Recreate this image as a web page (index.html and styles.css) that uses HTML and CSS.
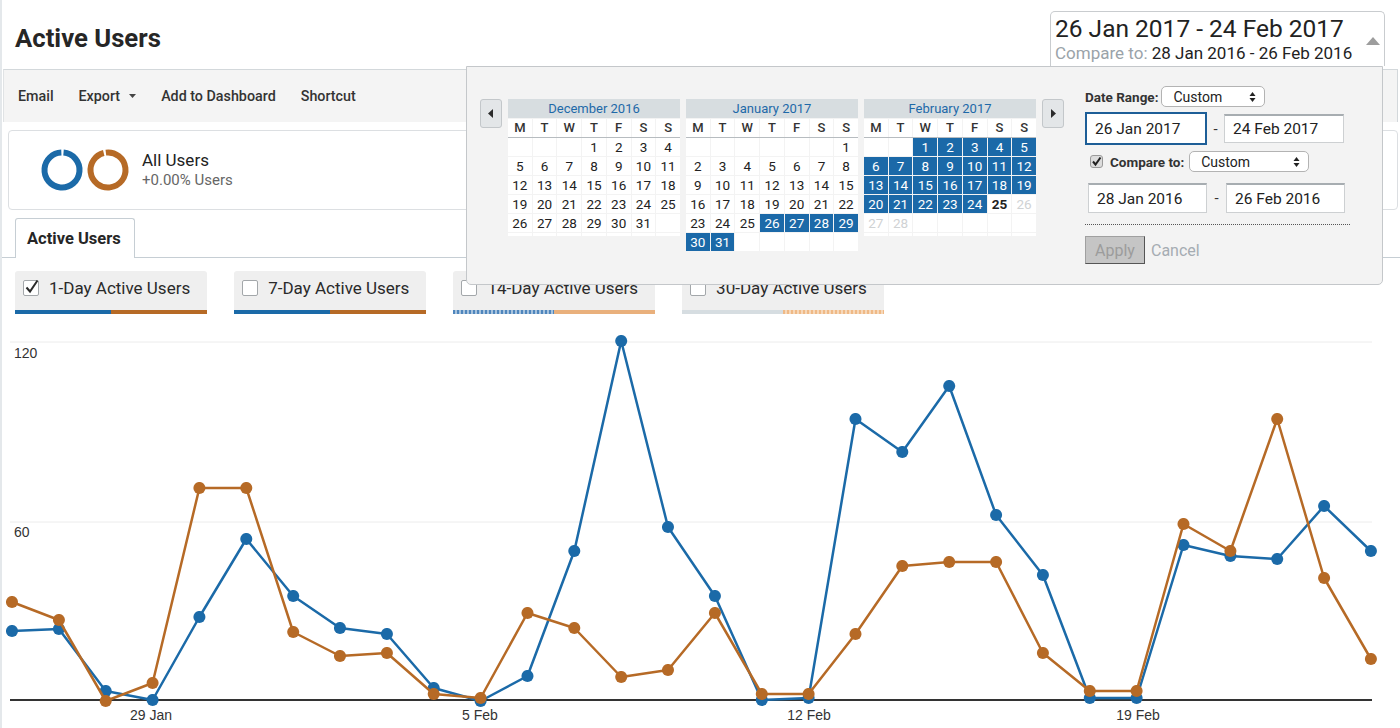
FILE: index.html
```html
<!DOCTYPE html>
<html lang="en">
<head>
<meta charset="utf-8">
<title>Active Users</title>
<link rel="stylesheet" href="styles.css">
</head>
<body>
<div class="page">
  <header class="head">
    <h1 class="title">Active Users</h1>
    <div class="range">
      <div class="range-box">
        <div class="range-text">
          <div class="range-main">26 Jan 2017 - 24 Feb 2017</div>
          <div class="range-cmp"><span class="cmp-label">Compare to:</span> 28 Jan 2016 - 26 Feb 2016</div>
        </div>
        <div class="range-caret"><svg width="14" height="8" viewBox="0 0 14 8"><path d="M7 0 L14 8 H0Z" fill="#9d9d9d"/></svg></div>
      </div>
      <div class="popup">
        <div class="cals">
          <div class="nav"><svg width="6" height="9" viewBox="0 0 6 9"><path d="M5 0 V9 L0 4.5Z" fill="#2b2b2b"/></svg></div>
          <div class="month">
            <div class="month-title">December 2016</div>
            <div class="wk"><span>M</span><span>T</span><span>W</span><span>T</span><span>F</span><span>S</span><span>S</span></div>
            <div class="days short">
              <span></span><span></span><span></span><span>1</span><span>2</span><span>3</span><span>4</span>
              <span>5</span><span>6</span><span>7</span><span>8</span><span>9</span><span>10</span><span>11</span>
              <span>12</span><span>13</span><span>14</span><span>15</span><span>16</span><span>17</span><span>18</span>
              <span>19</span><span>20</span><span>21</span><span>22</span><span>23</span><span>24</span><span>25</span>
              <span>26</span><span>27</span><span>28</span><span>29</span><span>30</span><span>31</span><span></span>
              <span></span><span></span><span></span><span></span><span></span><span></span><span></span>
            </div>
          </div>
          <div class="month">
            <div class="month-title">January 2017</div>
            <div class="wk"><span>M</span><span>T</span><span>W</span><span>T</span><span>F</span><span>S</span><span>S</span></div>
            <div class="days">
              <span></span><span></span><span></span><span></span><span></span><span></span><span>1</span>
              <span>2</span><span>3</span><span>4</span><span>5</span><span>6</span><span>7</span><span>8</span>
              <span>9</span><span>10</span><span>11</span><span>12</span><span>13</span><span>14</span><span>15</span>
              <span>16</span><span>17</span><span>18</span><span>19</span><span>20</span><span>21</span><span>22</span>
              <span>23</span><span>24</span><span>25</span><span class="s">26</span><span class="s">27</span><span class="s">28</span><span class="s">29</span>
              <span class="s">30</span><span class="s">31</span><span></span><span></span><span></span><span></span><span></span>
            </div>
          </div>
          <div class="month">
            <div class="month-title">February 2017</div>
            <div class="wk"><span>M</span><span>T</span><span>W</span><span>T</span><span>F</span><span>S</span><span>S</span></div>
            <div class="days short">
              <span></span><span></span><span class="s">1</span><span class="s">2</span><span class="s">3</span><span class="s">4</span><span class="s">5</span>
              <span class="s">6</span><span class="s">7</span><span class="s">8</span><span class="s">9</span><span class="s">10</span><span class="s">11</span><span class="s">12</span>
              <span class="s">13</span><span class="s">14</span><span class="s">15</span><span class="s">16</span><span class="s">17</span><span class="s">18</span><span class="s">19</span>
              <span class="s">20</span><span class="s">21</span><span class="s">22</span><span class="s">23</span><span class="s">24</span><span class="t">25</span><span class="m">26</span>
              <span class="m">27</span><span class="m">28</span><span></span><span></span><span></span><span></span><span></span>
              <span></span><span></span><span></span><span></span><span></span><span></span><span></span>
            </div>
          </div>
          <div class="nav"><svg width="6" height="9" viewBox="0 0 6 9"><path d="M1 0 V9 L6 4.5Z" fill="#2b2b2b"/></svg></div>
        </div>
        <div class="form">
          <div class="frow r1">
            <span class="lbl">Date Range:</span>
            <div class="sel-box sel-a"><span>Custom</span><svg width="7" height="12" viewBox="0 0 7 12"><path d="M3.5 1 L6.5 5 H0.5Z M3.5 11 L6.5 7 H0.5Z" fill="#222"/></svg></div>
          </div>
          <div class="frow r2">
            <div class="inp inp-focus">26 Jan 2017</div>
            <span class="dash">-</span>
            <div class="inp inp-a">24 Feb 2017</div>
          </div>
          <div class="frow r3">
            <span class="chk"><svg width="11" height="11" viewBox="0 0 11 11"><path d="M2 5.5 L4.5 8.5 L9.5 1.5" stroke="#222" stroke-width="2" fill="none"/></svg></span>
            <span class="lbl">Compare to:</span>
            <div class="sel-box sel-b"><span>Custom</span><svg width="7" height="12" viewBox="0 0 7 12"><path d="M3.5 1 L6.5 5 H0.5Z M3.5 11 L6.5 7 H0.5Z" fill="#222"/></svg></div>
          </div>
          <div class="frow r4">
            <div class="inp inp-b">28 Jan 2016</div>
            <span class="dash">-</span>
            <div class="inp inp-b">26 Feb 2016</div>
          </div>
          <div class="rule"></div>
          <div class="frow r5">
            <span class="apply">Apply</span>
            <span class="cancel">Cancel</span>
          </div>
        </div>
      </div>
    </div>
  </header>

  <nav class="toolbar">
    <span class="tb">Email</span>
    <span class="tb">Export <svg width="7" height="4" viewBox="0 0 7 4"><path d="M0 0 H7 L3.5 4Z" fill="#444"/></svg></span>
    <span class="tb">Add to Dashboard</span>
    <span class="tb">Shortcut</span>
  </nav>

  <section class="segment">
    <svg class="donuts" width="92" height="44" viewBox="0 0 92 44">
      <circle cx="23" cy="22" r="17.5" fill="none" stroke="#1b6aa8" stroke-width="6" stroke-dasharray="107 3" transform="rotate(-85 23 22)"/>
      <circle cx="69" cy="22" r="17.5" fill="none" stroke="#b66a26" stroke-width="6" stroke-dasharray="107 3" transform="rotate(-97 69 22)"/>
    </svg>
    <div class="seg-text">
      <div class="seg-name">All Users</div>
      <div class="seg-sub">+0.00% Users</div>
    </div>
  </section>

  <div class="tabs">
    <div class="tab">Active Users</div>
  </div>

  <div class="metrics">
    <div class="metric">
      <div class="metric-main">
        <span class="cb"><svg width="18" height="18" viewBox="0 0 18 18"><path d="M3.5 9.5 L7 13.5 L14.5 2.5" stroke="#2a2a2a" stroke-width="2" fill="none"/></svg></span>
        <span class="metric-label">1-Day Active Users</span>
      </div>
      <div class="metric-bar"><span class="bar-blue"></span><span class="bar-orange"></span></div>
    </div>
    <div class="metric">
      <div class="metric-main">
        <span class="cb"></span>
        <span class="metric-label">7-Day Active Users</span>
      </div>
      <div class="metric-bar"><span class="bar-blue"></span><span class="bar-orange"></span></div>
    </div>
    <div class="metric">
      <div class="metric-main">
        <span class="cb"></span>
        <span class="metric-label">14-Day Active Users</span>
      </div>
      <div class="metric-bar"><span class="bar-blue-dot"></span><span class="bar-orange-light"></span></div>
    </div>
    <div class="metric">
      <div class="metric-main">
        <span class="cb"></span>
        <span class="metric-label">30-Day Active Users</span>
      </div>
      <div class="metric-bar"><span class="bar-gray"></span><span class="bar-orange-hatch"></span></div>
    </div>
  </div>

  <svg class="chart" width="1398" height="408" viewBox="2 320 1398 408">
    <defs>
      <marker id="mb" viewBox="0 0 14 14" refX="7" refY="7" markerWidth="13" markerHeight="13" markerUnits="userSpaceOnUse"><circle cx="7" cy="7" r="6.5" fill="#1b6aa8"/></marker>
      <marker id="mo" viewBox="0 0 14 14" refX="7" refY="7" markerWidth="13" markerHeight="13" markerUnits="userSpaceOnUse"><circle cx="7" cy="7" r="6.5" fill="#b66a26"/></marker>
    </defs>
    <line x1="10" y1="342" x2="1372" y2="342" stroke="#ececec" stroke-width="1"/>
    <line x1="10" y1="522" x2="1372" y2="522" stroke="#ececec" stroke-width="1"/>
    <text class="ax" x="14" y="357.5">120</text>
    <text class="ax" x="14" y="537">60</text>
    <line x1="10" y1="700" x2="1372" y2="700" stroke="#333" stroke-width="2"/>
    <polyline class="ln-blue" marker-start="url(#mb)" marker-mid="url(#mb)" marker-end="url(#mb)" points="12,631 58.9,629 105.7,691 152.6,700 199.4,617 246.3,539 293.2,596 340,628 386.9,634 433.7,688 480.6,701 527.5,676 574.3,551 621.2,341 668,527 714.9,596 761.8,700 808.6,698 855.5,419 902.3,452 949.2,386 996.1,515 1042.9,575 1089.8,698 1136.6,698 1183.5,545 1230.4,556 1277.2,559 1324.1,506 1370.9,551"/>
    <polyline class="ln-orange" marker-start="url(#mo)" marker-mid="url(#mo)" marker-end="url(#mo)" points="12,602 58.9,620 105.7,701 152.6,683 199.4,488 246.3,488 293.2,632 340,656 386.9,653 433.7,694 480.6,698 527.5,613 574.3,628 621.2,677 668,670 714.9,613 761.8,694 808.6,694 855.5,634 902.3,566 949.2,562 996.1,562 1042.9,653 1089.8,691 1136.6,691 1183.5,524 1230.4,551 1277.2,419 1324.1,578 1370.9,659"/>
    <text class="ax mid" x="151" y="720">29 Jan</text>
    <text class="ax mid" x="480" y="720">5 Feb</text>
    <text class="ax mid" x="809" y="720">12 Feb</text>
    <text class="ax mid" x="1138" y="720">19 Feb</text>
  </svg>
</div>
</body>
</html>
```

FILE: styles.css
```css
* { box-sizing: border-box; }
html, body { margin: 0; padding: 0; }
body {
  width: 1400px;
  height: 728px;
  overflow: hidden;
  background: #fff;
  font-family: Roboto, "Noto Sans", Arial, sans-serif;
  color: #222;
}
.page { border-left: 2px solid #e4e8eb; height: 728px; }

/* header */
.head {
  position: relative;
  z-index: 5;
  height: 69px;
  display: flex;
  justify-content: space-between;
  align-items: flex-start;
}
.title {
  margin: 0;
  padding: 23px 0 0 13px;
  font-size: 25.7px;
  line-height: 30px;
  font-weight: 700;
  color: #262626;
}
.range { position: relative; margin: 11px 15px 0 0; }
.range-box {
  width: 335px;
  height: 55px;
  border: 1px solid #c9cccf;
  border-bottom: 0;
  border-radius: 5px 5px 0 0;
  display: flex;
  background: #fff;
}
.range-text { flex: 1; padding: 3px 0 0 4px; }
.range-main { font-size: 24.5px; line-height: 28px; color: #222; white-space: nowrap; }
.range-cmp { font-size: 17px; line-height: 20px; color: #222; white-space: nowrap; }
.cmp-label { color: #9aa3a9; }
.range-caret { width: 23px; padding-top: 25px; display: flex; justify-content: center; align-items: flex-start; }

/* popup */
.popup {
  position: absolute;
  top: 55px;
  right: 2px;
  width: 917px;
  height: 219px;
  background: #f3f3f3;
  border: 1px solid #c4c7ca;
  border-radius: 0 0 5px 5px;
  display: flex;
  align-items: flex-start;
  padding: 19px 0 0 13px;
}
.cals { display: flex; align-items: flex-start; gap: 6px; margin-top: 13px; }
.nav {
  width: 22px;
  height: 29px;
  border: 1px solid #c3c7ca;
  border-radius: 3px;
  background: #e3e6e8;
  display: flex;
  align-items: center;
  justify-content: center;
}
.month { width: 172px; }
.month-title {
  height: 19px;
  line-height: 19px;
  margin-bottom: 1px;
  background: #d7dde0;
  color: #1e69a8;
  text-align: center;
  font-size: 13px;
}
.wk {
  display: grid;
  grid-template-columns: repeat(7, 1fr);
  column-gap: 1px;
  height: 19px;
  border-bottom: 1px solid #b7bcc0;
}
.wk span { background: #fff; text-align: center; font-size: 13px; line-height: 18px; font-weight: 500; color: #333; }
.days {
  display: grid;
  grid-template-columns: repeat(7, 1fr);
  gap: 1px;
  grid-template-rows: repeat(6, 18px);
}
.days.short { grid-template-rows: repeat(5, 18px) 3px; }
.days span { background: #fff; text-align: center; font-size: 13.5px; line-height: 18px; color: #222; overflow: hidden; }
.days .s { background: #1b69a8; color: #fff; }
.days .m { color: #cfd2d4; }
.days .t { font-weight: 700; }

/* form */
.form { margin-left: 21px; width: 266px; }
.frow { display: flex; align-items: center; }
.lbl { font-size: 13.5px; font-weight: 700; color: #333; }
.sel-box {
  height: 21px;
  border: 1px solid #b3b3b3;
  border-radius: 5px;
  background: #fff;
  display: flex;
  align-items: center;
  justify-content: space-between;
  padding: 0 8px 0 11px;
  font-size: 14px;
  color: #222;
}
.sel-a { width: 104px; margin-left: 3px; }
.sel-b { width: 120px; margin-left: 5px; }
.inp {
  display: flex;
  align-items: center;
  background: #fff;
  font-size: 15.5px;
  color: #222;
  border: 1px solid #cdd0d2;
  border-top: 2px solid #a7adb1;
  padding-left: 8px;
}
.inp-focus { width: 122px; height: 33px; border: 2px solid #1d5e97; }
.inp-a { width: 120px; height: 29px; }
.inp-b { width: 119px; height: 30px; }
.dash { width: 17px; text-align: center; font-size: 15px; color: #333; }
.r2 { margin-top: 5px; }
.r3 { margin-top: 6px; }
.chk {
  width: 13px;
  height: 13px;
  margin-left: 5px;
  border: 1px solid #9a9a9a;
  border-radius: 3px;
  background: #dcdcdc;
  display: flex;
  align-items: center;
  justify-content: center;
}
.r3 .lbl { margin-left: 7px; }
.r4 { margin-top: 11px; padding-left: 3px; }
.r4 .dash { width: 19px; }
.rule { margin-top: 11px; border-top: 1px dotted #555; width: 265px; }
.r5 { margin-top: 11px; }
.apply {
  width: 60px;
  height: 28px;
  background: #c5c5c5;
  border: 1px solid #a0a0a0;
  border-right-color: #555;
  border-bottom-color: #555;
  color: #9c9c9c;
  font-size: 16px;
  display: flex;
  align-items: center;
  justify-content: center;
}
.cancel { margin-left: 6px; font-size: 16px; color: #a5acb2; }

/* toolbar */
.toolbar {
  height: 53px;
  margin: 0 2px 0 1px;
  border-top: 1px solid #d3d8db;
  border-left: 1px solid #e0e3e5;
  border-right: 1px solid #d3d8db;
  background: #f4f4f4;
  display: flex;
  align-items: center;
  gap: 25px;
  padding-left: 14px;
}
.tb { font-size: 14.3px; font-weight: 500; color: #333; display: flex; align-items: center; gap: 9px; }

/* segment */
.segment {
  margin: 8px 2px 0 6px;
  height: 80px;
  border: 1px solid #dcdfe2;
  border-radius: 4px;
  display: flex;
  align-items: center;
  padding-left: 30px;
}
.donuts { display: block; }
.seg-text { margin-left: 11px; }
.seg-name { font-size: 17px; line-height: 20px; color: #222; }
.seg-sub { font-size: 15px; line-height: 20px; color: #666; }

/* tabs */
.tabs {
  margin-top: 8px;
  height: 40px;
  border-bottom: 1px solid #c6ced4;
  padding-left: 13px;
  display: flex;
  align-items: flex-end;
}
.tab {
  height: 40px;
  margin-bottom: -1px;
  border: 1px solid #c6ced4;
  border-bottom: 0;
  border-radius: 3px 3px 0 0;
  background: #fff;
  padding: 0 13px 0 11px;
  display: flex;
  align-items: center;
  font-size: 16.5px;
  font-weight: 700;
  color: #262626;
  white-space: nowrap;
}

/* metrics */
.metrics { display: flex; gap: 27px; padding: 13px 0 0 13px; align-items: flex-start; }
.metric { background: #efefef; border-radius: 3px 3px 0 0; }
.metric-main { height: 39px; display: flex; align-items: center; padding: 0 17px 6px 8px; gap: 10px; }
.cb {
  width: 16px;
  height: 16px;
  border: 1px solid #a3a7aa;
  border-radius: 2px;
  background: #fff;
  position: relative;
}
.cb svg { position: absolute; left: -1px; top: -3px; }
.metric-label { font-size: 17px; color: #2a2a2a; white-space: nowrap; }
.metric-bar { display: flex; height: 4px; }
.metric-bar span { flex: 1; }
.bar-blue { background: #1b6aa8; }
.bar-orange { background: #b66a26; }
.bar-blue-dot { background: repeating-linear-gradient(90deg, #4f86bd 0 2px, #a8c3dd 2px 4px); }
.bar-orange-light { background: #e9b07c; }
.bar-gray { background: #d6dde1; }
.bar-orange-hatch { background: repeating-linear-gradient(90deg, #efb986 0 2px, #f6d8ba 2px 4px); }

/* chart */
.chart { display: block; margin-top: 6px; }
.ax { font-family: "Liberation Sans", Arial, sans-serif; font-size: 14px; fill: #333; }
.mid { text-anchor: middle; }
.ln-blue { fill: none; stroke: #1b6aa8; stroke-width: 2.5; stroke-linejoin: round; }
.ln-orange { fill: none; stroke: #b66a26; stroke-width: 2.5; stroke-linejoin: round; }
```
